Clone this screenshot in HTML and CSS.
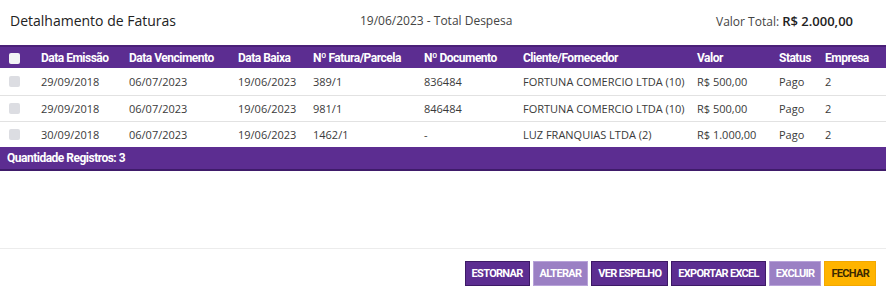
FILE: index.html
```html
<!DOCTYPE html>
<html lang="pt-BR">
<head>
    <meta charset="UTF-8">
    <meta name="viewport" content="width=device-width, initial-scale=1.0">
    <title>Detalhamento de Faturas</title>
    <link rel="stylesheet" href="styles.css">
</head>
<body>
    <div class="modal">
        <div class="topBar">
            <h1>Detalhamento de Faturas</h1>
            <div class="subtitle">19/06/2023 - Total Despesa</div>
            <div class="total">Valor Total: <b>R$ 2.000,00</b></div>
        </div>
        <table class="grid">
            <colgroup>
                <col class="cCheck">
                <col class="cEmissao">
                <col class="cVenc">
                <col class="cBaixa">
                <col class="cFatura">
                <col class="cDoc">
                <col class="cCliente">
                <col class="cValor">
                <col class="cStatus">
                <col>
            </colgroup>
            <thead>
                <tr>
                    <th><span class="check head"></span></th>
                    <th>Data Emissão</th>
                    <th>Data Vencimento</th>
                    <th>Data Baixa</th>
                    <th>Nº Fatura/Parcela</th>
                    <th>Nº Documento</th>
                    <th>Cliente/Fornecedor</th>
                    <th>Valor</th>
                    <th>Status</th>
                    <th>Empresa</th>
                </tr>
            </thead>
            <tbody>
                <tr>
                    <td><span class="check"></span></td>
                    <td>29/09/2018</td>
                    <td>06/07/2023</td>
                    <td>19/06/2023</td>
                    <td>389/1</td>
                    <td>836484</td>
                    <td>FORTUNA COMERCIO LTDA (10)</td>
                    <td>R$ 500,00</td>
                    <td>Pago</td>
                    <td>2</td>
                </tr>
                <tr>
                    <td><span class="check"></span></td>
                    <td>29/09/2018</td>
                    <td>06/07/2023</td>
                    <td>19/06/2023</td>
                    <td>981/1</td>
                    <td>846484</td>
                    <td>FORTUNA COMERCIO LTDA (10)</td>
                    <td>R$ 500,00</td>
                    <td>Pago</td>
                    <td>2</td>
                </tr>
                <tr>
                    <td><span class="check"></span></td>
                    <td>30/09/2018</td>
                    <td>06/07/2023</td>
                    <td>19/06/2023</td>
                    <td>1462/1</td>
                    <td>-</td>
                    <td>LUZ FRANQUIAS LTDA (2)</td>
                    <td>R$ 1.000,00</td>
                    <td>Pago</td>
                    <td>2</td>
                </tr>
            </tbody>
        </table>
        <div class="count">Quantidade Registros: 3</div>
        <div class="footer">
            <button class="btn">ESTORNAR</button>
            <button class="btn off">ALTERAR</button>
            <button class="btn">VER ESPELHO</button>
            <button class="btn">EXPORTAR EXCEL</button>
            <button class="btn off">EXCLUIR</button>
            <button class="btn close">FECHAR</button>
        </div>
    </div>
</body>
</html>
```

FILE: styles.css
```css
body {
    margin: 0;
    background-color: #fff;
    font-family: "Open Sans", sans-serif;
    color: #3a3a3a;
    overflow: hidden;
}

.modal {
    width: 886px;
    height: 298px;
    display: flex;
    flex-direction: column;
}

.topBar {
    height: 45px;
    display: flex;
    align-items: center;
    padding: 0 33px 0 10px;
    box-sizing: border-box;
}
h1 {
    margin: 0;
    font-size: 14px;
    font-weight: 400;
    color: #222;
    width: 350px;
    margin-top: -4px;
}
.subtitle {
    font-size: 12px;
    color: #444;
    margin-top: -4px;
}
.total {
    margin-left: auto;
    font-size: 12px;
    color: #444;
    margin-top: -4px;
}
.total b {
    font-size: 13px;
    font-weight: 600;
    color: #222;
}

.grid {
    width: 100%;
    border-collapse: collapse;
    table-layout: fixed;
    font-size: 11px;
}
.cCheck { width: 41px; }
.cEmissao { width: 88px; }
.cVenc { width: 109px; }
.cBaixa { width: 75px; }
.cFatura { width: 111px; }
.cDoc { width: 99px; }
.cCliente { width: 174px; }
.cValor { width: 82px; }
.cStatus { width: 46px; }

.grid th {
    background-color: #5c2d91;
    border-top: 2px solid #4a2078;
    color: #fff;
    font-family: Roboto, sans-serif;
    font-weight: 700;
    font-size: 12px;
    letter-spacing: -0.5px;
    text-align: left;
    height: 21px;
    padding: 0;
    white-space: nowrap;
}
.grid td {
    height: 25px;
    padding: 0;
    border-bottom: 1px solid #e2e2e2;
    white-space: nowrap;
}
.grid tbody tr:first-child td {
    height: 27px;
}
.grid tbody tr:last-child td {
    border-bottom: none;
}
.grid th:first-child,
.grid td:first-child {
    padding-left: 9px;
}

.check {
    display: block;
    width: 11px;
    height: 11px;
    border-radius: 2px;
    background-color: #dcdde2;
}
.check.head {
    background-color: #f2f2f5;
    margin-top: 1px;
}

.count {
    background-color: #5c2d91;
    border-bottom: 2px solid #3f1b6a;
    color: #fff;
    font-family: Roboto, sans-serif;
    font-weight: 700;
    font-size: 12px;
    letter-spacing: -0.5px;
    height: 22px;
    line-height: 22px;
    padding-left: 7px;
}

.footer {
    margin-top: 77px;
    border-top: 1px solid #ececec;
    display: flex;
    justify-content: flex-end;
    gap: 3px;
    padding: 12px 10px 0 0;
}
.btn {
    font-family: Roboto, sans-serif;
    font-weight: 700;
    font-size: 11px;
    letter-spacing: -0.7px;
    height: 25px;
    padding: 0 6px;
    border: 1px solid #3d1a66;
    background-color: #5c2d91;
    color: #fff;
    cursor: pointer;
}
.btn.off {
    background-color: #9b80c4;
    border-color: #b7a2d8;
}
.btn.close {
    background-color: #ffb400;
    border-color: #f3a800;
    color: #3b2a00;
}
```
